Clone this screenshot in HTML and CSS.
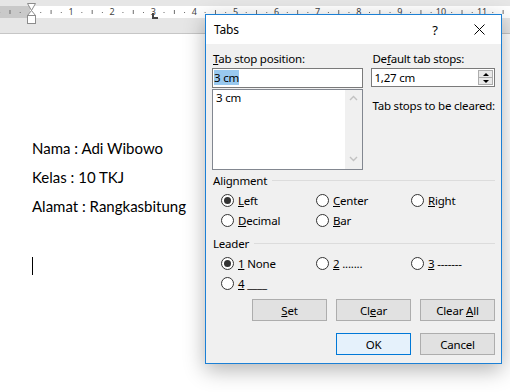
FILE: index.html
```html
<!DOCTYPE html>
<html lang="en">
<head>
    <meta charset="UTF-8">
    <title>Tabs</title>
    <link rel="stylesheet" href="styles.css">
</head>
<body>
    <!-- Ruler -->
    <div class="ruler-area">
        <div class="ruler">
            <div class="ruler-nums">
                <span>1</span><span>2</span><span>3</span><span>4</span><span>5</span><span>6</span>
                <span>7</span><span>8</span><span>9</span><span>10</span><span>11</span>
            </div>
            <svg class="indent-marker" width="9" height="22" viewBox="0 0 9 22">
                <path d="M0.5 0.5 H8.5 L4.5 7.5 Z" fill="#fff" stroke="#8c8c8c"/>
                <path d="M4.5 7.5 L8.5 12.5 H0.5 Z" fill="#fff" stroke="#8c8c8c"/>
                <rect x="0.5" y="12.5" width="8" height="8" fill="#fff" stroke="#8c8c8c"/>
            </svg>
            <span class="tab-marker"></span>
        </div>
    </div>

    <!-- Document -->
    <div class="page">
        <p>Nama : Adi Wibowo</p>
        <p>Kelas : 10 TKJ</p>
        <p>Alamat : Rangkasbitung</p>
        <p></p>
        <p><span class="caret"></span></p>
    </div>

    <!-- Tabs dialog -->
    <div class="dialog">
        <div class="titlebar">
            <span class="title">Tabs</span>
            <span class="help">?</span>
            <span class="close">
                <svg width="11" height="11" viewBox="0 0 11 11"><path d="M0.5 0.5 L10.5 10.5 M10.5 0.5 L0.5 10.5" stroke="#000" stroke-width="1"/></svg>
            </span>
        </div>
        <div class="dialog-body">
            <div class="top-row">
                <div class="col-left">
                    <div class="label"><u>T</u>ab stop position:</div>
                    <div class="textbox"><span class="selection">3 cm</span></div>
                    <div class="listbox">
                        <div class="list-items">3 cm</div>
                        <div class="scrollbar">
                            <svg width="9" height="6" viewBox="0 0 9 6"><path d="M1 5 L4.5 1.5 L8 5" fill="none" stroke="#c2c2c2" stroke-width="1.4"/></svg>
                            <svg width="9" height="6" viewBox="0 0 9 6"><path d="M1 1 L4.5 4.5 L8 1" fill="none" stroke="#c2c2c2" stroke-width="1.4"/></svg>
                        </div>
                    </div>
                </div>
                <div class="col-right">
                    <div class="label">De<u>f</u>ault tab stops:</div>
                    <div class="spinbox">
                        <span class="spin-value">1,27 cm</span>
                        <div class="spin">
                            <div class="spin-up"><i></i></div>
                            <div class="spin-down"><i></i></div>
                        </div>
                    </div>
                    <div class="note">Tab stops to be cleared:</div>
                </div>
            </div>

            <div class="group-head"><span>Alignment</span><hr></div>
            <div class="radios">
                <div class="radio on"><i></i><span><u>L</u>eft</span></div>
                <div class="radio"><i></i><span><u>C</u>enter</span></div>
                <div class="radio"><i></i><span><u>R</u>ight</span></div>
                <div class="radio"><i></i><span><u>D</u>ecimal</span></div>
                <div class="radio"><i></i><span><u>B</u>ar</span></div>
            </div>

            <div class="group-head leader"><span>Leader</span><hr></div>
            <div class="radios">
                <div class="radio on"><i></i><span><u>1</u> None</span></div>
                <div class="radio"><i></i><span><u>2</u> .......</span></div>
                <div class="radio"><i></i><span><u>3</u> -------</span></div>
                <div class="radio"><i></i><span><u>4</u> ____</span></div>
            </div>

            <div class="btn-row first">
                <button class="btn"><u>S</u>et</button>
                <button class="btn">Cl<u>e</u>ar</button>
                <button class="btn">Clear <u>A</u>ll</button>
            </div>
            <div class="btn-row">
                <button class="btn default">OK</button>
                <button class="btn">Cancel</button>
            </div>
        </div>
    </div>
</body>
</html>
```

FILE: styles.css
```css
*, *::before, *::after {
    margin: 0;
    padding: 0;
    box-sizing: border-box;
}

body {
    position: relative;
    width: 510px;
    height: 392px;
    overflow: hidden;
    background: #fff;
    font-family: "Noto Sans", sans-serif;
    color: #000;
}

/* Ruler */
.ruler-area {
    height: 34px;
    padding-top: 6px;
    background: #e6e6e6;
    border-bottom: 1px solid #c6c6c6;
}

.ruler {
    position: relative;
    height: 12px;
    background:
        linear-gradient(90deg, #6a6a6a 1px, transparent 1px) 9.5px 4px / 41.1px 4px repeat-x,
        linear-gradient(90deg, #6a6a6a 1px, transparent 1px) -0.85px 6px / 20.55px 1px repeat-x,
        linear-gradient(90deg, #c9c9c9 30px, #fff 30px);
}

.ruler-nums {
    display: flex;
    padding-left: 50.55px;
    font-size: 9px;
    line-height: 12px;
    color: #444;
}

.ruler-nums span {
    flex: none;
    width: 41.1px;
    text-align: center;
}

.indent-marker {
    position: absolute;
    left: 27px;
    top: -3px;
}

.tab-marker {
    position: absolute;
    left: 152px;
    top: 7px;
    width: 6px;
    height: 6px;
    border-left: 2px solid #444;
    border-bottom: 2px solid #444;
}

/* Document */
.page {
    padding: 100px 0 0 32px;
    font-family: Lato, sans-serif;
    font-size: 15px;
}

.page p {
    height: 29px;
    line-height: 29px;
}

.caret {
    display: inline-block;
    width: 1px;
    height: 18px;
    background: #000;
    vertical-align: middle;
}

/* Dialog */
.dialog {
    position: absolute;
    left: 205px;
    top: 14px;
    width: 297px;
    border: 1px solid #1c80d5;
    background: #f0f0f0;
    box-shadow: 0 6px 20px rgba(0,0,0,0.3);
    font-size: 11.5px;
    letter-spacing: -0.2px;
}

.titlebar {
    display: flex;
    align-items: center;
    height: 29px;
    padding-left: 8px;
    background: #fff;
    font-size: 12px;
}

.title {
    flex: 1;
}

.help, .close {
    width: 44px;
    display: flex;
    justify-content: center;
}

.help {
    font-size: 13px;
}

.dialog-body {
    padding: 7px 6px 8px;
}

.top-row {
    display: flex;
    gap: 8px;
}

.col-left {
    width: 152px;
}

.col-right {
    flex: 1;
}

.label {
    height: 17px;
    line-height: 16px;
    padding-left: 1px;
}

.textbox {
    height: 20px;
    border: 1px solid #7a7a7a;
    background: #fff;
    padding-left: 1px;
    line-height: 17px;
}

.selection {
    background: #99c9ef;
}

.listbox {
    display: flex;
    height: 81px;
    margin-top: 1px;
    border: 1px solid #828790;
    background: #fff;
}

.list-items {
    flex: 1;
    padding: 0 3px;
    line-height: 16px;
}

.scrollbar {
    width: 17px;
    padding: 5px 0 7px;
    background: #f0f0f0;
    display: flex;
    flex-direction: column;
    justify-content: space-between;
    align-items: center;
}

.spinbox {
    display: flex;
    height: 19px;
    border: 1px solid #7a7a7a;
    background: #fff;
}

.spin-value {
    flex: 1;
    padding-left: 2px;
    line-height: 17px;
}

.spin {
    width: 15px;
    margin: 1px;
    border: 1px solid #adadad;
    background: #e9e9e9;
    display: flex;
    flex-direction: column;
}

.spin-up, .spin-down {
    flex: 1;
    display: flex;
    align-items: center;
    justify-content: center;
}

.spin-down {
    border-top: 1px solid #adadad;
}

.spin-up i {
    border-left: 3px solid transparent;
    border-right: 3px solid transparent;
    border-bottom: 3px solid #000;
}

.spin-down i {
    border-left: 3px solid transparent;
    border-right: 3px solid transparent;
    border-top: 3px solid #000;
}

.note {
    margin-top: 11px;
    line-height: 16px;
    padding-left: 1px;
    white-space: nowrap;
}

.group-head {
    display: flex;
    align-items: center;
    margin-top: 2px;
    height: 16px;
    padding-left: 1px;
}

.group-head hr {
    flex: 1;
    margin-left: 5px;
    border: none;
    border-top: 1px solid #dcdcdc;
}

.group-head.leader {
    margin-top: 5px;
}

.radios {
    display: grid;
    grid-template-columns: 95px 95px 1fr;
    margin-top: 2px;
    padding-left: 9px;
}

.radio {
    display: flex;
    align-items: center;
    height: 20px;
}

.radio i {
    width: 13px;
    height: 13px;
    margin-right: 4px;
    border: 1px solid #333;
    border-radius: 50%;
    background: #fff;
    display: flex;
    align-items: center;
    justify-content: center;
}

.radio.on i::after {
    content: "";
    width: 7px;
    height: 7px;
    border-radius: 50%;
    background: #333;
}

.btn-row {
    display: flex;
    justify-content: flex-end;
    gap: 9px;
    margin-top: 12px;
}

.btn-row.first {
    margin-top: 6px;
}

.btn {
    width: 75px;
    height: 22px;
    border: 1px solid #adadad;
    background: #e1e1e1;
    font: inherit;
    letter-spacing: inherit;
    color: #000;
}

.btn.default {
    border-color: #0078d7;
    background: #e5f1fb;
}
```
